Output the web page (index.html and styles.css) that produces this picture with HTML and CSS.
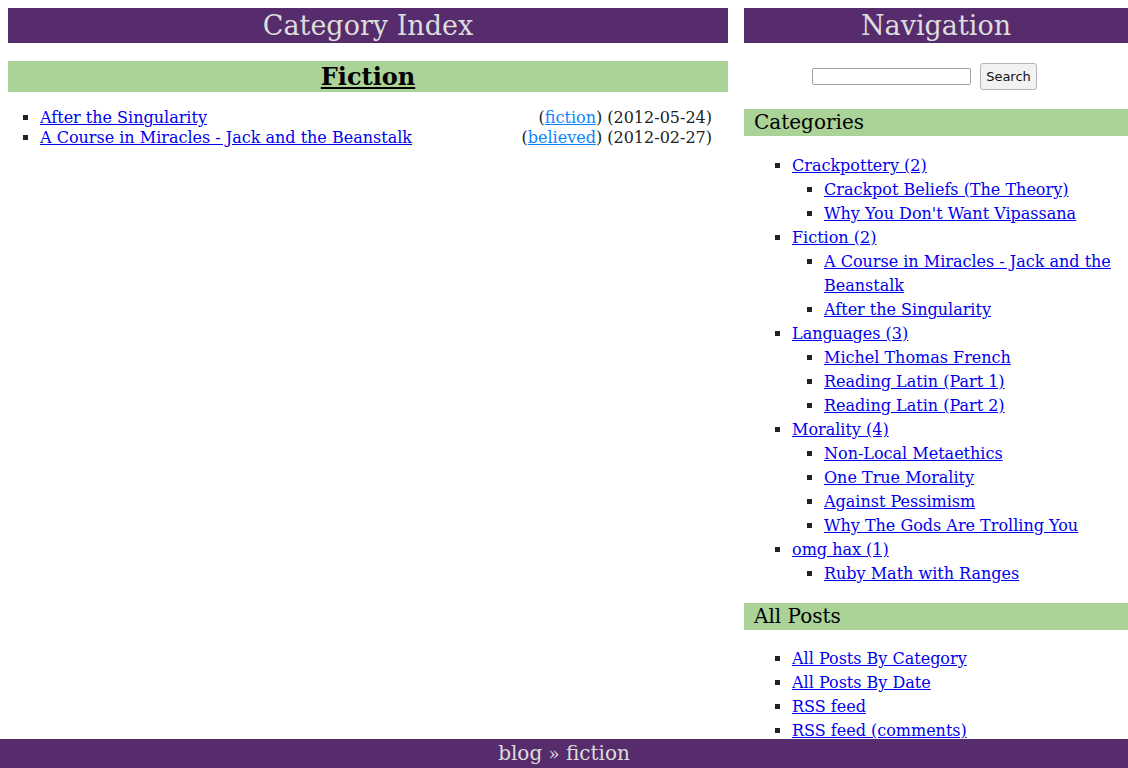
FILE: index.html
```html
<!DOCTYPE html>
<html>
<head>
<meta charset="utf-8">
<title>Category Index</title>
<link rel="stylesheet" href="styles.css">
</head>
<body>
<div class="page">
  <div class="main">
    <h1 class="bar-title">Category Index</h1>
    <h2 class="section-title"><a href="#">Fiction</a></h2>
    <ul class="post-list">
      <li><span class="meta">(<a class="tag" href="#">fiction</a>) (2012-05-24)</span><a href="#">After the Singularity</a></li>
      <li><span class="meta">(<a class="tag" href="#">believed</a>) (2012-02-27)</span><a href="#">A Course in Miracles - Jack and the Beanstalk</a></li>
    </ul>
  </div>
  <div class="side">
    <h1 class="bar-title">Navigation</h1>
    <form class="search">
      <input class="search-input" type="text">
      <button class="search-btn" type="button">Search</button>
    </form>
    <h3 class="side-title">Categories</h3>
    <ul class="nav-list cats">
      <li><a href="#">Crackpottery (2)</a>
        <ul>
          <li><a href="#">Crackpot Beliefs (The Theory)</a></li>
          <li><a href="#">Why You Don't Want Vipassana</a></li>
        </ul>
      </li>
      <li><a href="#">Fiction (2)</a>
        <ul>
          <li><a href="#">A Course in Miracles - Jack and the Beanstalk</a></li>
          <li><a href="#">After the Singularity</a></li>
        </ul>
      </li>
      <li><a href="#">Languages (3)</a>
        <ul>
          <li><a href="#">Michel Thomas French</a></li>
          <li><a href="#">Reading Latin (Part 1)</a></li>
          <li><a href="#">Reading Latin (Part 2)</a></li>
        </ul>
      </li>
      <li><a href="#">Morality (4)</a>
        <ul>
          <li><a href="#">Non-Local Metaethics</a></li>
          <li><a href="#">One True Morality</a></li>
          <li><a href="#">Against Pessimism</a></li>
          <li><a href="#">Why The Gods Are Trolling You</a></li>
        </ul>
      </li>
      <li><a href="#">omg hax (1)</a>
        <ul>
          <li><a href="#">Ruby Math with Ranges</a></li>
        </ul>
      </li>
    </ul>
    <h3 class="side-title side-title-next">All Posts</h3>
    <ul class="nav-list posts">
      <li><a href="#">All Posts By Category</a></li>
      <li><a href="#">All Posts By Date</a></li>
      <li><a href="#">RSS feed</a></li>
      <li><a href="#">RSS feed (comments)</a></li>
    </ul>
  </div>
</div>
<div class="footer">blog <span class="raquo">»</span> fiction</div>
</body>
</html>
```
FILE: styles.css
```css
html, body {
  margin: 0;
  padding: 0;
}
body {
  font-family: "DejaVu Serif", serif;
  font-size: 16px;
  color: #222;
  background: #fff;
}
a {
  color: #0000ee;
}
.page {
  display: flex;
  gap: 16px;
  padding: 8px 0 40px 8px;
}
.main {
  width: 720px;
  flex: none;
}
.side {
  flex: 1;
}
.bar-title {
  margin: 0;
  background: #572c6d;
  color: #dddddd;
  font-weight: normal;
  font-size: 27px;
  line-height: 35px;
  height: 35px;
  text-align: center;
}
.section-title {
  margin: 18px 0 0;
  background: #abd398;
  font-size: 24px;
  line-height: 31px;
  height: 31px;
  text-align: center;
}
.section-title a {
  color: #000;
}
.post-list {
  list-style: square;
  margin: 16px 16px 0 0;
  padding-left: 32px;
  line-height: 20px;
}
.meta {
  float: right;
  color: #222;
}
.tag {
  color: #0a84ff;
}
.search {
  display: flex;
  justify-content: center;
  align-items: center;
  gap: 9px;
  margin: 20px 0 0;
  padding-right: 23px;
  height: 27px;
}
.search-input {
  width: 159px;
  height: 17px;
  box-sizing: border-box;
  border: 1px solid #a0a0a0;
  border-radius: 2px;
  padding: 0;
  margin: 0;
}
.search-btn {
  height: 27px;
  width: 57px;
  box-sizing: border-box;
  font-family: "DejaVu Sans", sans-serif;
  font-size: 13px;
  color: #111;
  background: #f2f2f2;
  border: 1px solid #b5b5b5;
  border-radius: 3px;
  padding: 0;
  margin: 0;
}
.side-title {
  margin: 19px 0 0;
  background: #abd398;
  font-weight: normal;
  font-size: 20px;
  line-height: 27px;
  height: 27px;
  padding-left: 10px;
  color: #000;
}
.side-title-next {
  margin-top: 17px;
}
.nav-list {
  list-style: square;
  padding-left: 48px;
  line-height: 24px;
}
.cats {
  margin: 18px 0 0;
}
.posts {
  margin: 17px 0 0;
}
.nav-list ul {
  list-style: square;
  margin: 0;
  padding-left: 32px;
}
.footer {
  position: fixed;
  left: 0;
  right: 0;
  bottom: 0;
  height: 29px;
  line-height: 29px;
  background: #572c6d;
  color: #dddddd;
  font-size: 20px;
  text-align: center;
}
.raquo {
  font-size: 18px;
}
```
